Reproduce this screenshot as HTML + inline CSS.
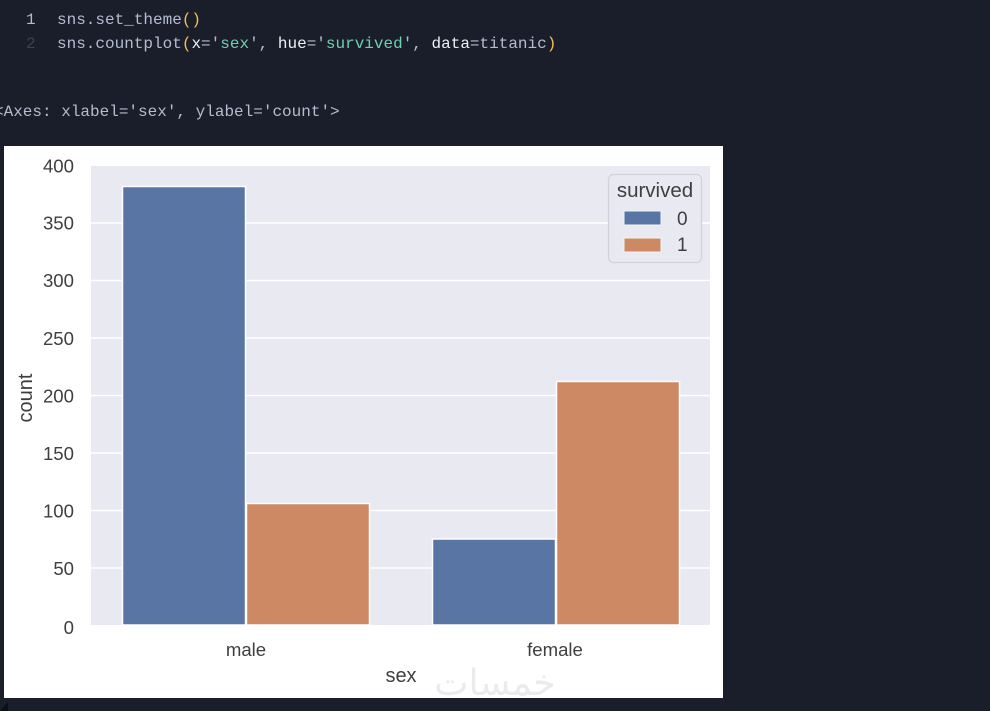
<!DOCTYPE html>
<html>
<head>
<meta charset="utf-8">
<style>
html,body{margin:0;padding:0;width:990px;height:711px;overflow:hidden;background:#1a1e2a;}
.c{position:absolute;white-space:pre;font-family:"Liberation Mono","DejaVu Sans Mono",monospace;font-size:16px;line-height:24px;color:#b4bccf;}
.w{color:#eef1f6}.y{color:#f0c050}.g{color:#6fd0b0}.d{color:#3d4250}
svg{position:absolute;left:0;top:0;filter:blur(.35px)}
text{font-family:"Liberation Sans",Arial,sans-serif;fill:#3f3f3f}
</style>
</head>
<body>
<div class="c" style="left:26px;top:8px;color:#b4bccf">1</div>
<div class="c d" style="left:26px;top:32px">2</div>
<div class="c" style="left:57px;top:8px">sns.set_theme<span class="y">()</span></div>
<div class="c" style="left:57px;top:32px">sns.countplot<span class="y">(</span><span class="w">x</span>='<span class="g">sex</span>', <span class="w">hue</span>='<span class="g">survived</span>', <span class="w">data</span>=titanic<span class="y">)</span></div>
<div class="c" style="left:-6px;top:100px">&lt;Axes: xlabel='sex', ylabel='count'&gt;</div>

<svg width="990" height="711" viewBox="0 0 990 711">
<rect x="4" y="146" width="719" height="552" fill="#fff"/>
<rect x="91" y="166" width="619" height="459" fill="#e9e9f1"/>
<g stroke="#fff" stroke-width="1.4">
<line x1="91" x2="710" y1="223" y2="223"/>
<line x1="91" x2="710" y1="280.5" y2="280.5"/>
<line x1="91" x2="710" y1="338" y2="338"/>
<line x1="91" x2="710" y1="395.5" y2="395.5"/>
<line x1="91" x2="710" y1="453" y2="453"/>
<line x1="91" x2="710" y1="510.5" y2="510.5"/>
<line x1="91" x2="710" y1="568" y2="568"/>
</g>
<g stroke="#fff" stroke-width="1.5">
<rect x="122.5" y="186.5" width="123" height="438.5" fill="#5975a4"/>
<rect x="246.5" y="503.5" width="123" height="121.5" fill="#cc8963"/>
<rect x="432.5" y="539" width="123" height="86" fill="#5975a4"/>
<rect x="556.5" y="381.5" width="123" height="243.5" fill="#cc8963"/>
</g>
<g font-size="18.6" text-anchor="end">
<text x="74" y="172.5">400</text>
<text x="74" y="229.5">350</text>
<text x="74" y="287">300</text>
<text x="74" y="345">250</text>
<text x="74" y="402.5">200</text>
<text x="74" y="460">150</text>
<text x="74" y="517.5">100</text>
<text x="74" y="575">50</text>
<text x="74" y="634">0</text>
</g>
<text x="246" y="656" font-size="18.6" text-anchor="middle">male</text>
<text x="555" y="656" font-size="18.6" text-anchor="middle">female</text>
<text x="401" y="682" font-size="20" text-anchor="middle">sex</text>
<text transform="translate(32,398) rotate(-90)" font-size="20" text-anchor="middle">count</text>
<rect x="608.5" y="174.5" width="93" height="88" rx="5" fill="#e9e9f1" stroke="#d2d2d8" stroke-width="1.2"/>
<text x="655" y="197" font-size="20.5" text-anchor="middle">survived</text>
<rect x="624" y="211" width="37" height="14" fill="#5975a4" stroke="#f2f2f6" stroke-width="1"/>
<rect x="624" y="238" width="37" height="14" fill="#cc8963" stroke="#f2f2f6" stroke-width="1"/>
<text x="677" y="225" font-size="19">0</text>
<text x="677" y="251" font-size="19">1</text>
<text x="495" y="695" font-size="36.5" text-anchor="middle" style="font-family:'DejaVu Sans','Noto Sans CJK SC',sans-serif;fill:#ebebeb" direction="rtl">خمسات</text>
<path d="M0 711 L8 702 L8 711 Z" fill="#0d1018"/>
</svg>
</body>
</html>
